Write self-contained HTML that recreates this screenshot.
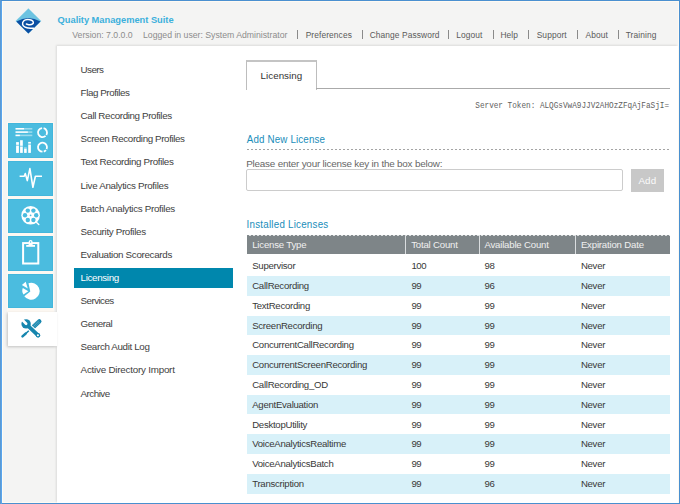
<!DOCTYPE html>
<html><head><meta charset="utf-8">
<style>
html,body{margin:0;padding:0;}
body{width:680px;height:504px;position:relative;overflow:hidden;background:#f4f4f3;font-family:"Liberation Sans", sans-serif;}
.t{position:absolute;white-space:pre;}
.sep{position:absolute;top:30px;width:1px;height:9px;background:#8a8a8a;}
.row{position:absolute;left:247px;width:423px;background:#d8f1f9;}
</style></head><body>
<div style="position:absolute;left:0;top:0;width:680px;height:1px;background:#4a90d0"></div>
<div style="position:absolute;left:0;top:503px;width:680px;height:1px;background:#4a90d0"></div>
<div style="position:absolute;left:0;top:0;width:1px;height:504px;background:#5c9ad2"></div>
<div style="position:absolute;left:1px;top:1px;width:1px;height:503px;background:#5aa5ee"></div>
<div style="position:absolute;left:679px;top:0;width:1px;height:504px;background:#4a90d0"></div>
<div style="position:absolute;left:2px;top:1px;width:677px;height:1px;background:#fffaf2"></div>
<div style="position:absolute;left:2px;top:1px;width:1px;height:502px;background:#fdfdf5"></div>
<div style="position:absolute;left:678px;top:1px;width:1px;height:502px;background:#fffaf2"></div>
<div style="position:absolute;left:2px;top:502px;width:677px;height:1px;background:#fffaf2"></div>
<!-- main panel -->
<div style="position:absolute;left:57px;top:46px;width:621px;height:457px;background:#fff;box-shadow:-1px -1px 2px rgba(0,0,0,0.10)"></div>
<!-- selected menu -->
<div style="position:absolute;left:74px;top:268px;width:159px;height:20px;background:#0087ad"></div>
<!-- tab -->
<div style="position:absolute;left:246px;top:60px;width:69px;height:28px;border:1px solid #bdbdbd;border-bottom:none;border-top:2px solid #c4c4c4;background:#fff"></div>
<div style="position:absolute;left:316px;top:88px;width:354px;height:1px;background:#aaaaaa"></div>
<!-- dotted line -->
<div style="position:absolute;left:247px;top:149px;width:423px;height:1px;background:repeating-linear-gradient(to right,#a4a4a4 0 2px,transparent 2px 4px)"></div>
<!-- input -->
<div style="position:absolute;left:246px;top:169px;width:375px;height:20px;border:1px solid #cccccc;border-radius:2px;background:#fff"></div>
<div style="position:absolute;left:631px;top:169px;width:33px;height:23px;background:#c8c8c8"></div>
<!-- table header -->
<div style="position:absolute;left:247px;top:236px;width:423px;height:18px;background:#7e8588"></div>
<div style="position:absolute;left:247px;top:235px;width:423px;height:1px;background:repeating-linear-gradient(to right,#848b8e 0 2px,#dcdfe0 2px 4px)"></div>
<div style="position:absolute;left:405px;top:235px;width:1px;height:19px;background:#dadddf"></div>
<div style="position:absolute;left:479px;top:235px;width:1px;height:19px;background:#dadddf"></div>
<div style="position:absolute;left:575px;top:235px;width:1px;height:19px;background:#dadddf"></div>
<div class="row" style="top:276.00px;height:19.5px"></div>
<div class="row" style="top:315.60px;height:19.5px"></div>
<div class="row" style="top:355.20px;height:19.5px"></div>
<div class="row" style="top:394.80px;height:19.5px"></div>
<div class="row" style="top:434.40px;height:19.5px"></div>
<div class="row" style="top:474.00px;height:19.5px"></div>

<!-- sidebar tiles -->
<div style="position:absolute;left:7px;top:122px;width:47px;height:190px;background:#fdf8f2"></div>
<div style="position:absolute;left:8px;top:123px;width:45px;height:35px;background:#4bbcdf;box-sizing:border-box;border:1px solid #43b6dc"></div>
<div style="position:absolute;left:8px;top:161px;width:45px;height:35px;background:#4bbcdf;box-sizing:border-box;border:1px solid #43b6dc"></div>
<div style="position:absolute;left:8px;top:199px;width:45px;height:34px;background:#4bbcdf;box-sizing:border-box;border:1px solid #43b6dc"></div>
<div style="position:absolute;left:8px;top:236px;width:45px;height:35px;background:#4bbcdf;box-sizing:border-box;border:1px solid #43b6dc"></div>
<div style="position:absolute;left:8px;top:274px;width:45px;height:34px;background:#4bbcdf;box-sizing:border-box;border:1px solid #43b6dc"></div>
<div style="position:absolute;left:8px;top:311.5px;width:49px;height:34px;background:#fff;box-shadow:-1.5px 1px 2.5px rgba(0,0,0,0.2)"></div>
<svg style="position:absolute;left:0;top:0" width="680" height="504" viewBox="0 0 680 504">
<!-- logo -->
<path d="M28.4,8.3 L41.3,20.9 L28.4,33.8 L15.5,20.9 Z" fill="#6cc3e1" stroke="#ffffff" stroke-width="0.4" stroke-opacity="0.6"/>
<path d="M16.3,21.6 Q28.4,14.4 40.5,21.6 L28.4,33.6 Z" fill="#0b4ea2"/>
<path d="M33.6,28.3 C32.78,28.25 30.12,28.18 28.7,28.0 C27.28,27.82 26.12,27.82 25.1,27.2 C24.08,26.58 22.80,25.37 22.6,24.3 C22.40,23.23 23.07,21.58 23.9,20.8 C24.73,20.02 26.32,19.68 27.6,19.6 C28.88,19.52 30.65,19.88 31.6,20.3 C32.55,20.72 33.13,21.50 33.3,22.1 C33.47,22.70 33.18,23.45 32.6,23.9 C32.02,24.35 30.83,24.77 29.8,24.8 C28.77,24.83 26.97,24.22 26.4,24.1" fill="none" stroke="#ffffff" stroke-width="1.5" stroke-linecap="round"/>
<!-- tile1: bars + donuts -->
<g fill="#ffffff">
<rect x="15.5" y="128" width="8.6" height="1.6"/><rect x="24.1" y="128" width="8.2" height="1.6" fill-opacity="0.45"/>
<rect x="15.5" y="131.3" width="12.4" height="1.6"/><rect x="27.9" y="131.3" width="4.4" height="1.6" fill-opacity="0.45"/>
<rect x="15.5" y="134.6" width="4.4" height="1.6"/><rect x="19.9" y="134.6" width="12.4" height="1.6" fill-opacity="0.45"/>
<rect x="16.1" y="146" width="2.8" height="6.9"/><rect x="16.1" y="142.1" width="2.8" height="2.7"/><rect x="16.1" y="144.8" width="2.8" height="1.2" fill-opacity="0.45"/>
<rect x="20.1" y="146.8" width="2.7" height="6.1"/><rect x="20.1" y="140.2" width="2.7" height="5.6"/><rect x="20.1" y="145.8" width="2.7" height="1" fill-opacity="0.45"/>
<rect x="24.1" y="148.7" width="2.6" height="4.2"/><rect x="24.1" y="147.2" width="2.6" height="1.5" fill-opacity="0.45"/>
<rect x="28.2" y="145" width="2.7" height="7.9"/><rect x="28.2" y="141.9" width="2.7" height="1.6"/><rect x="28.2" y="143.5" width="2.7" height="1.5" fill-opacity="0.45"/>
</g>
<g fill="none" stroke="#ffffff" stroke-width="1.8">
<path d="M43.59,128.23 A4.5,4.5 0 0 1 46.36,134.92"/>
<path d="M45.57,135.89 A4.5,4.5 0 1 1 42.11,128.12"/>
<path d="M46.61,149.03 A4.5,4.5 0 1 0 42.50,151.70"/>
<path d="M45.95,150.09 A4.5,4.5 0 0 1 43.74,151.53"/>
</g>
<!-- tile2: pulse -->
<path d="M19.6,176.3 L24.2,176.3 L25.3,173.6 L27.3,180.6 L29.9,168.6 L32.9,187.3 L35.4,176.3 L42,176.3" fill="none" stroke="#ffffff" stroke-width="1.6" stroke-linejoin="round"/>
<!-- tile3: film reel -->
<g>
<circle cx="30.6" cy="215.3" r="9.3" fill="#ffffff"/>
<g fill="#4bbcdf">
<circle cx="27.8" cy="210.6" r="2.2"/><circle cx="33.4" cy="210.6" r="2.2"/>
<circle cx="25" cy="215.3" r="2.2"/><circle cx="36.2" cy="215.3" r="2.2"/>
<circle cx="27.8" cy="220" r="2.2"/><circle cx="33.4" cy="220" r="2.2"/>
<circle cx="30.6" cy="215.3" r="0.9"/>
</g>
<path d="M35.8,221.8 L38.8,224.6" stroke="#ffffff" stroke-width="1.4" stroke-linecap="round"/>
</g>
<!-- tile4: clipboard -->
<rect x="23.1" y="243.1" width="15.2" height="20.4" fill="none" stroke="#ffffff" stroke-width="2"/>
<circle cx="30.6" cy="242" r="2" fill="#ffffff"/>
<circle cx="30.6" cy="242" r="0.7" fill="#4bbcdf"/>
<rect x="26.2" y="245" width="8.8" height="1.8" fill="#ffffff"/>
<rect x="28.6" y="243" width="4" height="2.5" fill="#ffffff"/>
<!-- tile5: pie -->
<path d="M30.3,291.5 L28.5,283.2 A8.5,8.5 0 1 1 24.3,296.3 Z" fill="#ffffff"/>
<path d="M28.3,291.2 L22.8,288 A6.8,6.8 0 0 0 23.5,294.5 Z" fill="#ffffff"/>
<path d="M27.8,288.6 L21.9,284.9 L25.7,281.8 Z" fill="#ffffff"/>
<!-- wrench tab icon -->
<g stroke="#1686ae" fill="none" stroke-linecap="round">
<path d="M39.3,321.4 L33.4,326.8" stroke-width="4.4"/>
<path d="M38.9,321.5 L33.6,326.3" stroke="#ffffff" stroke-width="0.5" stroke-dasharray="0.8 0.9" stroke-opacity="0.6"/>
<path d="M38.1,320.6 L32.8,325.4" stroke="#ffffff" stroke-width="0.45" stroke-dasharray="0.8 0.9" stroke-opacity="0.45"/>
<path d="M39.8,322.5 L34.5,327.3" stroke="#ffffff" stroke-width="0.45" stroke-dasharray="0.8 0.9" stroke-opacity="0.45"/>
<path d="M30.4,329.2 L24.6,334.6" stroke-width="1.5"/>
<path d="M25.6,333.6 L22.5,336.4" stroke-width="2.5"/>
<path d="M27.5,325.3 L38.2,335.6" stroke="#ffffff" stroke-width="6" stroke-linecap="butt"/>
</g>
<g fill="#1686ae">
<circle cx="26.1" cy="323.9" r="4.7"/>
<path d="M27.5,325.3 L38.1,335.4" stroke="#1686ae" stroke-width="3.8" stroke-linecap="round"/>
<circle cx="38" cy="335.3" r="2.2"/>
</g>
<path d="M26.1,323.7 L21.2,318.8" stroke="#ffffff" stroke-width="2.7" stroke-linecap="round"/>
<circle cx="37.9" cy="335.3" r="1.05" fill="#ffffff"/>
</svg>

<div class="t" style="left:57.60px;top:15.83px;font-size:9.3px;line-height:9.3px;color:#3cb0dc;font-weight:bold;letter-spacing:-0.01px;">Quality Management Suite</div>
<div class="t" style="left:72.30px;top:30.83px;font-size:8.7px;line-height:8.7px;color:#8c8c8c;font-weight:normal;">Version: 7.0.0.0</div>
<div class="t" style="left:143.00px;top:30.83px;font-size:8.7px;line-height:8.7px;color:#8c8c8c;font-weight:normal;">Logged in user: System Administrator</div>
<div class="t" style="left:305.70px;top:31.29px;font-size:8.4px;line-height:8.4px;color:#5a5a5a;font-weight:normal;letter-spacing:0.1px;">Preferences</div>
<div class="t" style="left:369.70px;top:31.29px;font-size:8.4px;line-height:8.4px;color:#5a5a5a;font-weight:normal;letter-spacing:0.1px;">Change Password</div>
<div class="t" style="left:456.30px;top:31.29px;font-size:8.4px;line-height:8.4px;color:#5a5a5a;font-weight:normal;letter-spacing:0.1px;">Logout</div>
<div class="t" style="left:500.40px;top:31.29px;font-size:8.4px;line-height:8.4px;color:#5a5a5a;font-weight:normal;letter-spacing:0.1px;">Help</div>
<div class="t" style="left:536.70px;top:31.29px;font-size:8.4px;line-height:8.4px;color:#5a5a5a;font-weight:normal;letter-spacing:0.1px;">Support</div>
<div class="t" style="left:585.50px;top:31.29px;font-size:8.4px;line-height:8.4px;color:#5a5a5a;font-weight:normal;letter-spacing:0.1px;">About</div>
<div class="t" style="left:625.70px;top:31.29px;font-size:8.4px;line-height:8.4px;color:#5a5a5a;font-weight:normal;letter-spacing:0.1px;">Training</div>
<div class="sep" style="left:297px"></div>
<div class="sep" style="left:362px"></div>
<div class="sep" style="left:448px"></div>
<div class="sep" style="left:493px"></div>
<div class="sep" style="left:528px"></div>
<div class="sep" style="left:577px"></div>
<div class="sep" style="left:618px"></div>
<div class="t" style="left:80.60px;top:64.90px;font-size:9.8px;line-height:9.8px;color:#3e3e3e;font-weight:normal;letter-spacing:-0.55px;">Users</div>
<div class="t" style="left:80.60px;top:88.02px;font-size:9.8px;line-height:9.8px;color:#3e3e3e;font-weight:normal;letter-spacing:-0.43px;">Flag Profiles</div>
<div class="t" style="left:80.60px;top:111.14px;font-size:9.8px;line-height:9.8px;color:#3e3e3e;font-weight:normal;letter-spacing:-0.368px;">Call Recording Profiles</div>
<div class="t" style="left:80.60px;top:134.26px;font-size:9.8px;line-height:9.8px;color:#3e3e3e;font-weight:normal;letter-spacing:-0.392px;">Screen Recording Profiles</div>
<div class="t" style="left:80.60px;top:157.38px;font-size:9.8px;line-height:9.8px;color:#3e3e3e;font-weight:normal;letter-spacing:-0.341px;">Text Recording Profiles</div>
<div class="t" style="left:80.60px;top:180.50px;font-size:9.8px;line-height:9.8px;color:#3e3e3e;font-weight:normal;letter-spacing:-0.309px;">Live Analytics Profiles</div>
<div class="t" style="left:80.60px;top:203.62px;font-size:9.8px;line-height:9.8px;color:#3e3e3e;font-weight:normal;letter-spacing:-0.313px;">Batch Analytics Profiles</div>
<div class="t" style="left:80.60px;top:226.74px;font-size:9.8px;line-height:9.8px;color:#3e3e3e;font-weight:normal;letter-spacing:-0.331px;">Security Profiles</div>
<div class="t" style="left:80.60px;top:249.86px;font-size:9.8px;line-height:9.8px;color:#3e3e3e;font-weight:normal;letter-spacing:-0.315px;">Evaluation Scorecards</div>
<div class="t" style="left:80.60px;top:272.98px;font-size:9.8px;line-height:9.8px;color:#ffffff;font-weight:normal;letter-spacing:-0.35px;">Licensing</div>
<div class="t" style="left:80.60px;top:296.10px;font-size:9.8px;line-height:9.8px;color:#3e3e3e;font-weight:normal;letter-spacing:-0.571px;">Services</div>
<div class="t" style="left:80.60px;top:319.22px;font-size:9.8px;line-height:9.8px;color:#3e3e3e;font-weight:normal;letter-spacing:-0.467px;">General</div>
<div class="t" style="left:80.60px;top:342.34px;font-size:9.8px;line-height:9.8px;color:#3e3e3e;font-weight:normal;letter-spacing:-0.353px;">Search Audit Log</div>
<div class="t" style="left:80.60px;top:365.46px;font-size:9.8px;line-height:9.8px;color:#3e3e3e;font-weight:normal;letter-spacing:-0.218px;">Active Directory Import</div>
<div class="t" style="left:80.60px;top:388.58px;font-size:9.8px;line-height:9.8px;color:#3e3e3e;font-weight:normal;letter-spacing:-0.517px;">Archive</div>
<div class="t" style="left:260.60px;top:71.00px;font-size:9.8px;line-height:9.8px;color:#333333;font-weight:normal;letter-spacing:0.02px;">Licensing</div>
<div class="t" style="left:475.30px;top:103.18px;font-size:7.7px;line-height:7.7px;color:#5e5e5e;font-weight:normal;font-family:'Liberation Mono', monospace;transform:scaleY(1.18);transform-origin:0 6.8px;">Server Token: ALQGsVwA9JJV2AHOzZFqAjFaSjI=</div>
<div class="t" style="left:246.80px;top:135.00px;font-size:9.8px;line-height:9.8px;color:#1a8dba;font-weight:normal;letter-spacing:0.14px;transform:scaleY(1.16);transform-origin:0 7.4px;">Add New License</div>
<div class="t" style="left:246.20px;top:158.52px;font-size:9.9px;line-height:9.9px;color:#666666;font-weight:normal;letter-spacing:-0.21px;">Please enter your license key in the box below:</div>
<div class="t" style="left:638.40px;top:175.70px;font-size:9.8px;line-height:9.8px;color:#fbfbfb;font-weight:normal;letter-spacing:0.15px;">Add</div>
<div class="t" style="left:246.60px;top:220.40px;font-size:9.8px;line-height:9.8px;color:#1a8dba;font-weight:normal;letter-spacing:0.22px;transform:scaleY(1.16);transform-origin:0 7.4px;">Installed Licenses</div>
<div class="t" style="left:252.20px;top:239.87px;font-size:9.6px;line-height:9.6px;color:#f0f0f0;font-weight:normal;letter-spacing:-0.18px;">License Type</div>
<div class="t" style="left:411.20px;top:239.87px;font-size:9.6px;line-height:9.6px;color:#f0f0f0;font-weight:normal;letter-spacing:-0.18px;">Total Count</div>
<div class="t" style="left:484.40px;top:239.87px;font-size:9.6px;line-height:9.6px;color:#f0f0f0;font-weight:normal;letter-spacing:-0.18px;">Available Count</div>
<div class="t" style="left:580.90px;top:239.87px;font-size:9.6px;line-height:9.6px;color:#f0f0f0;font-weight:normal;letter-spacing:-0.18px;">Expiration Date</div>
<div class="t" style="left:252.20px;top:261.27px;font-size:9.6px;line-height:9.6px;color:#383838;font-weight:normal;letter-spacing:-0.27px;">Supervisor</div>
<div class="t" style="left:411.40px;top:261.27px;font-size:9.6px;line-height:9.6px;color:#383838;font-weight:normal;letter-spacing:-0.4px;">100</div>
<div class="t" style="left:484.60px;top:261.27px;font-size:9.6px;line-height:9.6px;color:#383838;font-weight:normal;letter-spacing:-0.4px;">98</div>
<div class="t" style="left:580.90px;top:261.27px;font-size:9.6px;line-height:9.6px;color:#383838;font-weight:normal;letter-spacing:-0.27px;">Never</div>
<div class="t" style="left:252.20px;top:281.07px;font-size:9.6px;line-height:9.6px;color:#383838;font-weight:normal;letter-spacing:-0.27px;">CallRecording</div>
<div class="t" style="left:411.40px;top:281.07px;font-size:9.6px;line-height:9.6px;color:#383838;font-weight:normal;letter-spacing:-0.4px;">99</div>
<div class="t" style="left:484.60px;top:281.07px;font-size:9.6px;line-height:9.6px;color:#383838;font-weight:normal;letter-spacing:-0.4px;">96</div>
<div class="t" style="left:580.90px;top:281.07px;font-size:9.6px;line-height:9.6px;color:#383838;font-weight:normal;letter-spacing:-0.27px;">Never</div>
<div class="t" style="left:252.20px;top:300.87px;font-size:9.6px;line-height:9.6px;color:#383838;font-weight:normal;letter-spacing:-0.27px;">TextRecording</div>
<div class="t" style="left:411.40px;top:300.87px;font-size:9.6px;line-height:9.6px;color:#383838;font-weight:normal;letter-spacing:-0.4px;">99</div>
<div class="t" style="left:484.60px;top:300.87px;font-size:9.6px;line-height:9.6px;color:#383838;font-weight:normal;letter-spacing:-0.4px;">99</div>
<div class="t" style="left:580.90px;top:300.87px;font-size:9.6px;line-height:9.6px;color:#383838;font-weight:normal;letter-spacing:-0.27px;">Never</div>
<div class="t" style="left:252.20px;top:320.67px;font-size:9.6px;line-height:9.6px;color:#383838;font-weight:normal;letter-spacing:-0.27px;">ScreenRecording</div>
<div class="t" style="left:411.40px;top:320.67px;font-size:9.6px;line-height:9.6px;color:#383838;font-weight:normal;letter-spacing:-0.4px;">99</div>
<div class="t" style="left:484.60px;top:320.67px;font-size:9.6px;line-height:9.6px;color:#383838;font-weight:normal;letter-spacing:-0.4px;">99</div>
<div class="t" style="left:580.90px;top:320.67px;font-size:9.6px;line-height:9.6px;color:#383838;font-weight:normal;letter-spacing:-0.27px;">Never</div>
<div class="t" style="left:252.20px;top:340.47px;font-size:9.6px;line-height:9.6px;color:#383838;font-weight:normal;letter-spacing:-0.27px;">ConcurrentCallRecording</div>
<div class="t" style="left:411.40px;top:340.47px;font-size:9.6px;line-height:9.6px;color:#383838;font-weight:normal;letter-spacing:-0.4px;">99</div>
<div class="t" style="left:484.60px;top:340.47px;font-size:9.6px;line-height:9.6px;color:#383838;font-weight:normal;letter-spacing:-0.4px;">99</div>
<div class="t" style="left:580.90px;top:340.47px;font-size:9.6px;line-height:9.6px;color:#383838;font-weight:normal;letter-spacing:-0.27px;">Never</div>
<div class="t" style="left:252.20px;top:360.27px;font-size:9.6px;line-height:9.6px;color:#383838;font-weight:normal;letter-spacing:-0.27px;">ConcurrentScreenRecording</div>
<div class="t" style="left:411.40px;top:360.27px;font-size:9.6px;line-height:9.6px;color:#383838;font-weight:normal;letter-spacing:-0.4px;">99</div>
<div class="t" style="left:484.60px;top:360.27px;font-size:9.6px;line-height:9.6px;color:#383838;font-weight:normal;letter-spacing:-0.4px;">99</div>
<div class="t" style="left:580.90px;top:360.27px;font-size:9.6px;line-height:9.6px;color:#383838;font-weight:normal;letter-spacing:-0.27px;">Never</div>
<div class="t" style="left:252.20px;top:380.07px;font-size:9.6px;line-height:9.6px;color:#383838;font-weight:normal;letter-spacing:-0.27px;">CallRecording_OD</div>
<div class="t" style="left:411.40px;top:380.07px;font-size:9.6px;line-height:9.6px;color:#383838;font-weight:normal;letter-spacing:-0.4px;">99</div>
<div class="t" style="left:484.60px;top:380.07px;font-size:9.6px;line-height:9.6px;color:#383838;font-weight:normal;letter-spacing:-0.4px;">99</div>
<div class="t" style="left:580.90px;top:380.07px;font-size:9.6px;line-height:9.6px;color:#383838;font-weight:normal;letter-spacing:-0.27px;">Never</div>
<div class="t" style="left:252.20px;top:399.87px;font-size:9.6px;line-height:9.6px;color:#383838;font-weight:normal;letter-spacing:-0.27px;">AgentEvaluation</div>
<div class="t" style="left:411.40px;top:399.87px;font-size:9.6px;line-height:9.6px;color:#383838;font-weight:normal;letter-spacing:-0.4px;">99</div>
<div class="t" style="left:484.60px;top:399.87px;font-size:9.6px;line-height:9.6px;color:#383838;font-weight:normal;letter-spacing:-0.4px;">99</div>
<div class="t" style="left:580.90px;top:399.87px;font-size:9.6px;line-height:9.6px;color:#383838;font-weight:normal;letter-spacing:-0.27px;">Never</div>
<div class="t" style="left:252.20px;top:419.67px;font-size:9.6px;line-height:9.6px;color:#383838;font-weight:normal;letter-spacing:-0.27px;">DesktopUtility</div>
<div class="t" style="left:411.40px;top:419.67px;font-size:9.6px;line-height:9.6px;color:#383838;font-weight:normal;letter-spacing:-0.4px;">99</div>
<div class="t" style="left:484.60px;top:419.67px;font-size:9.6px;line-height:9.6px;color:#383838;font-weight:normal;letter-spacing:-0.4px;">99</div>
<div class="t" style="left:580.90px;top:419.67px;font-size:9.6px;line-height:9.6px;color:#383838;font-weight:normal;letter-spacing:-0.27px;">Never</div>
<div class="t" style="left:252.20px;top:439.47px;font-size:9.6px;line-height:9.6px;color:#383838;font-weight:normal;letter-spacing:-0.27px;">VoiceAnalyticsRealtime</div>
<div class="t" style="left:411.40px;top:439.47px;font-size:9.6px;line-height:9.6px;color:#383838;font-weight:normal;letter-spacing:-0.4px;">99</div>
<div class="t" style="left:484.60px;top:439.47px;font-size:9.6px;line-height:9.6px;color:#383838;font-weight:normal;letter-spacing:-0.4px;">99</div>
<div class="t" style="left:580.90px;top:439.47px;font-size:9.6px;line-height:9.6px;color:#383838;font-weight:normal;letter-spacing:-0.27px;">Never</div>
<div class="t" style="left:252.20px;top:459.27px;font-size:9.6px;line-height:9.6px;color:#383838;font-weight:normal;letter-spacing:-0.27px;">VoiceAnalyticsBatch</div>
<div class="t" style="left:411.40px;top:459.27px;font-size:9.6px;line-height:9.6px;color:#383838;font-weight:normal;letter-spacing:-0.4px;">99</div>
<div class="t" style="left:484.60px;top:459.27px;font-size:9.6px;line-height:9.6px;color:#383838;font-weight:normal;letter-spacing:-0.4px;">99</div>
<div class="t" style="left:580.90px;top:459.27px;font-size:9.6px;line-height:9.6px;color:#383838;font-weight:normal;letter-spacing:-0.27px;">Never</div>
<div class="t" style="left:252.20px;top:479.07px;font-size:9.6px;line-height:9.6px;color:#383838;font-weight:normal;letter-spacing:-0.27px;">Transcription</div>
<div class="t" style="left:411.40px;top:479.07px;font-size:9.6px;line-height:9.6px;color:#383838;font-weight:normal;letter-spacing:-0.4px;">99</div>
<div class="t" style="left:484.60px;top:479.07px;font-size:9.6px;line-height:9.6px;color:#383838;font-weight:normal;letter-spacing:-0.4px;">96</div>
<div class="t" style="left:580.90px;top:479.07px;font-size:9.6px;line-height:9.6px;color:#383838;font-weight:normal;letter-spacing:-0.27px;">Never</div>

</body></html>
